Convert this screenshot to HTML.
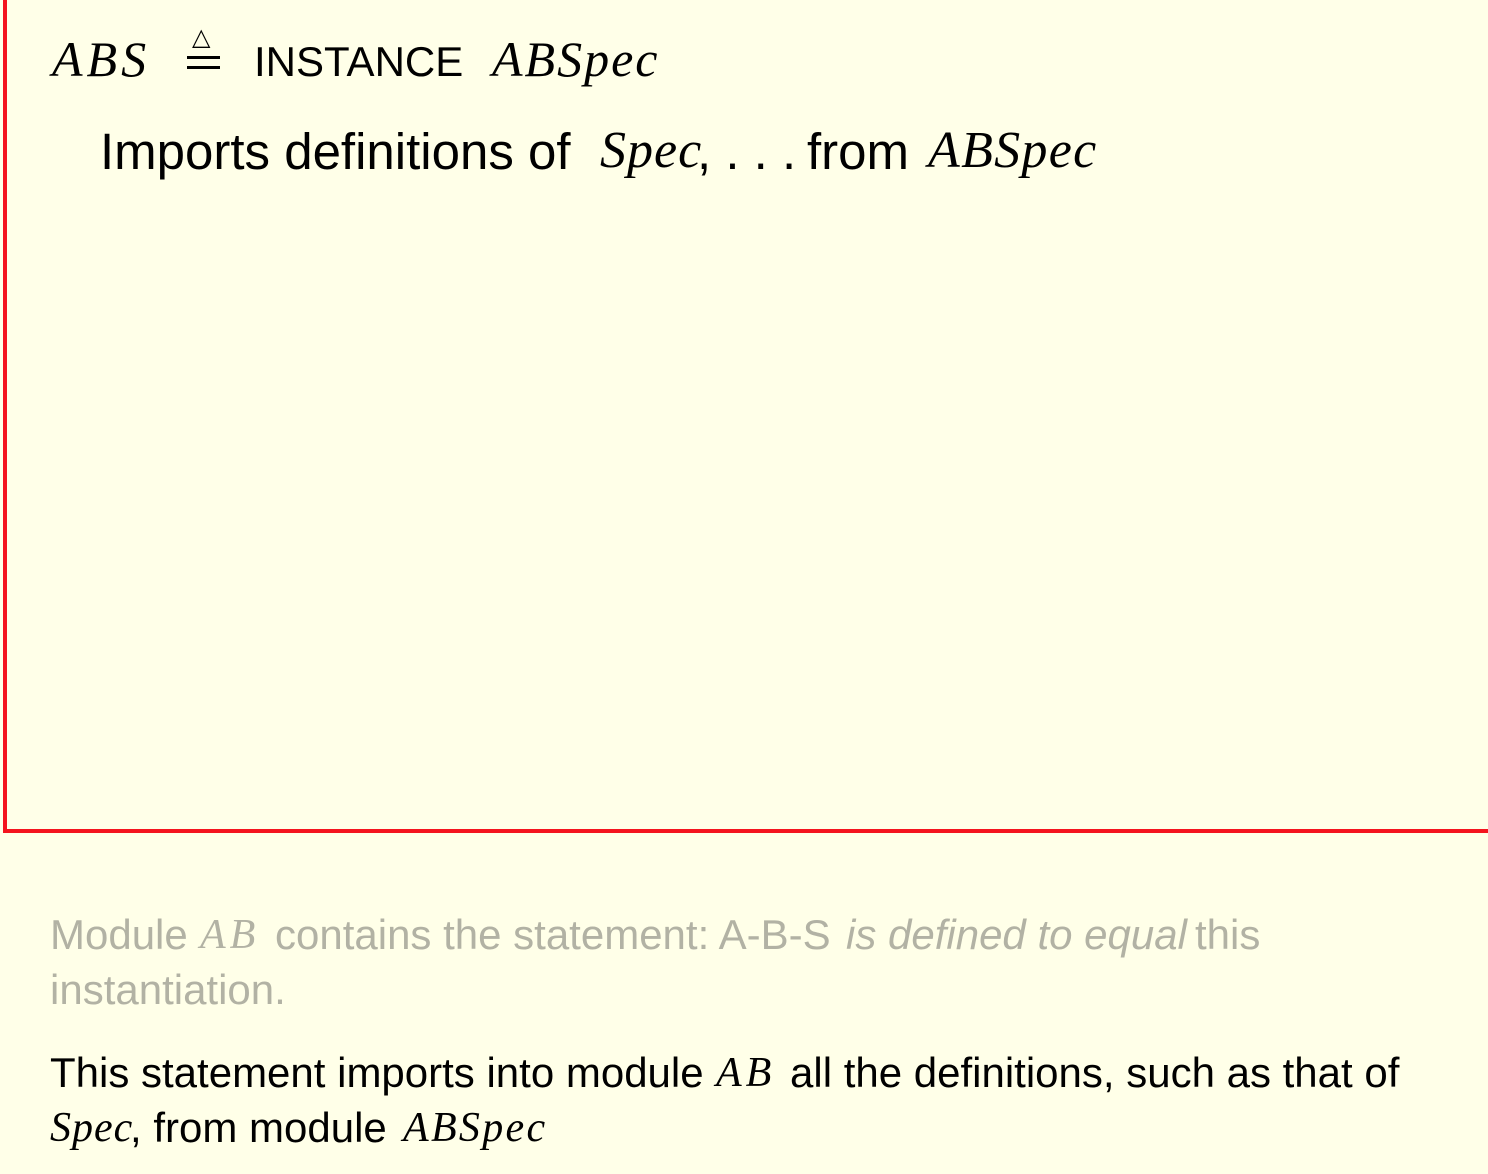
<!DOCTYPE html>
<html><head><meta charset="utf-8"><style>
html,body{margin:0;padding:0;background:#ffffe8;width:1488px;height:1174px;overflow:hidden;position:relative;font-family:"Liberation Sans",sans-serif}
.box{position:absolute;left:3px;top:-10px;width:1500px;height:839px;border-left:4px solid #f4141e;border-bottom:4px solid #f4141e}
.l{position:absolute;white-space:nowrap;line-height:1}
.m{font-family:"Liberation Serif",serif;font-style:italic}
.g{color:#b2b2a4}
.b{font-size:42px}
</style></head><body>
<div class="box"></div>
<div class="l m" style="left:52px;top:34px;font-size:50px;letter-spacing:4px">ABS</div>
<div class="l" style="left:192px;top:26px;font-size:24px">&#9651;</div>
<div style="position:absolute;left:187px;top:56px;width:33px;height:3px;background:#000"></div>
<div style="position:absolute;left:187px;top:66px;width:33px;height:3px;background:#000"></div>
<div class="l" style="left:254px;top:41px;font-size:42px">INSTANCE</div>
<div class="l m" style="left:492px;top:34px;font-size:50px;letter-spacing:2px">ABSpec</div>

<div class="l" style="left:100px;top:126px;font-size:51px">Imports definitions of</div>
<div class="l m" style="left:600px;top:125px;font-size:52px;letter-spacing:1px">Spec</div>
<div class="l" style="left:697px;top:126px;font-size:51px">, . . .</div>
<div class="l" style="left:807px;top:126px;font-size:51px">from</div>
<div class="l m" style="left:928px;top:125px;font-size:52px;letter-spacing:1.3px">ABSpec</div>

<div class="l g b" style="left:50px;top:914px">Module</div>
<div class="l g b m" style="left:200px;top:914px;letter-spacing:4px">AB</div>
<div class="l g b" style="left:275px;top:914px">contains the statement: A-B-S</div>
<div class="l g b" style="left:846px;top:914px"><i>is defined to equal</i></div>
<div class="l g b" style="left:1195px;top:914px">this</div>
<div class="l g b" style="left:50px;top:969px">instantiation.</div>

<div class="l b" style="left:50px;top:1052px">This statement imports into module</div>
<div class="l b m" style="left:716px;top:1052px;letter-spacing:4px">AB</div>
<div class="l b" style="left:790px;top:1052px">all the definitions, such as that of</div>
<div class="l b m" style="left:50px;top:1107px;letter-spacing:1px">Spec</div>
<div class="l b" style="left:130px;top:1107px">, from module</div>
<div class="l b m" style="left:403px;top:1107px;letter-spacing:2.3px">ABSpec</div>
</body></html>
